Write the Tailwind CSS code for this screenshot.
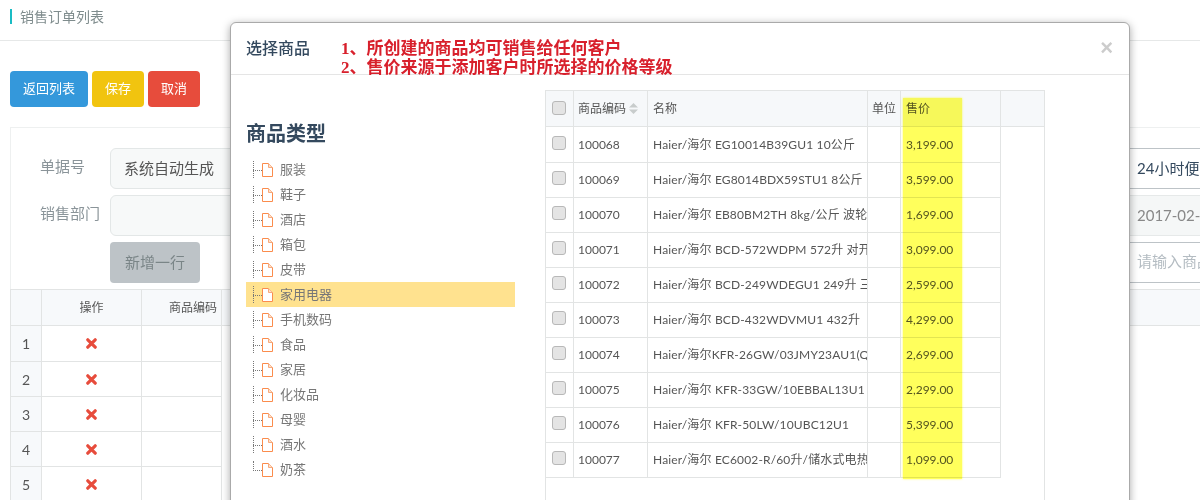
<!DOCTYPE html>
<html lang="zh-CN">
<head>
    <meta charset="UTF-8">
    <title>销售订单列表</title>
    <script src="https://cdn.jsdelivr.net/npm/@tailwindcss/browser@4"></script>
</head>
<body class="h-[500px] w-[1200px] overflow-hidden bg-white font-['Lato','Noto_Sans_CJK_SC',sans-serif] text-[#555]">

    <!-- page behind the dialog -->
    <div class="flex h-[41px] items-center border-b border-[#e6e8e8] pl-[10px] pb-[7px]">
        <span class="h-[15px] w-[2px] bg-[#1abcc4]"></span>
        <span class="ml-[8px] text-[14px] text-[#7f8c8d]">销售订单列表</span>
    </div>

    <div class="flex gap-[4px] px-[10px] pt-[30px] pb-[20px] text-[13px] text-white">
        <button class="h-[36px] w-[78px] rounded-[4px] bg-[#3498db]">返回列表</button>
        <button class="h-[36px] w-[52px] rounded-[4px] bg-[#f1c40f]">保存</button>
        <button class="h-[36px] w-[52px] rounded-[4px] bg-[#e74c3c]">取消</button>
    </div>

    <div class="ml-[10px] border-t border-l border-[#eef0f0] pt-[20px]">
        <div class="flex h-[41px] text-[15px]">
            <label class="w-[99px] pt-[7px] pl-[29px] text-[#8a9499]">单据号</label>
            <div class="flex w-[300px] items-center rounded-[6px] border border-[#e3e7e7] bg-[#f7f9f9] pl-[13px]">系统自动生成</div>
            <div class="ml-auto flex w-[80px] items-center overflow-hidden border-y border-[#bdc3c7] pl-[17px] whitespace-nowrap text-[#34495e]">24小时便利店</div>
        </div>
        <div class="mt-[6px] flex h-[41px] text-[15px]">
            <label class="w-[99px] pt-[7px] pl-[29px] text-[#8a9499]">销售部门</label>
            <div class="w-[300px] rounded-[6px] border border-[#e3e7e7] bg-[#f7f9f9]"></div>
            <div class="ml-auto flex w-[80px] items-center overflow-hidden border-y border-[#e6e9e9] bg-[#f5f7f7] pl-[17px] whitespace-nowrap text-[#888]">2017-02-14</div>
        </div>
        <div class="mt-[6px] flex h-[41px] text-[15px]">
            <div class="w-[99px]"></div>
            <button class="w-[90px] rounded-[4px] bg-[#bdc3c7] text-[#7a8587]">新增一行</button>
            <div class="ml-auto flex w-[80px] items-center overflow-hidden border-y border-[#bdc3c7] pb-[2px] pl-[17px] whitespace-nowrap text-[#b4bcc2]">请输入商品</div>
        </div>

        <table class="mt-[6px] -ml-[1px] w-[1190px] table-fixed border-separate border-spacing-0 text-[12px]">
            <colgroup><col class="w-[32px]"><col class="w-[100px]"><col class="w-[80px]"><col></colgroup>
            <thead>
                <tr class="h-[37px] bg-[#f7f9fb] font-normal">
                    <th class="border border-[#e2e4e4] font-normal"></th>
                    <th class="border-y border-r border-[#e2e4e4] font-normal">操作</th>
                    <th class="border-y border-r border-[#e2e4e4] pl-[27px] text-left font-normal whitespace-nowrap">商品编码</th>
                    <th class="border-y border-[#e2e4e4] font-normal"></th>
                </tr>
            </thead>
            <tbody id="orderRows"></tbody>
        </table>
    </div>

    <!-- dialog -->
    <div class="absolute top-[22px] left-[230px] h-[600px] w-[900px] rounded-[6px] border border-[#aaa] bg-white shadow-[0_2px_8px_rgba(0,0,0,0.35)]">
        <div class="relative flex h-[52px] border-b border-[#e5e5e5]">
            <h4 class="mt-[14px] ml-[15px] text-[16px] leading-[22px] font-medium text-[#34495e]">选择商品</h4>
            <div class="mt-[16px] ml-[31px] font-['Liberation_Serif','Noto_Sans_CJK_SC',serif] text-[17px] leading-[19px] font-bold text-[#d8202c]">
                <p>1、所创建的商品均可销售给任何客户</p>
                <p>2、售价来源于添加客户时所选择的价格等级</p>
            </div>
            <span class="absolute top-[13px] right-[16px] font-['Liberation_Sans',sans-serif] text-[22px] leading-[24px] font-bold text-[#ccc]">×</span>
        </div>

        <div class="flex">
            <div class="w-[314px] shrink-0 pt-[46px] pl-[15px]">
                <h3 class="text-[20px] leading-[24px] font-bold text-[#34495e]">商品类型</h3>
                <ul id="tree" class="mt-[12px] w-[269px] text-[13px] text-[#777]"></ul>
            </div>

            <div class="mt-[15px] h-[520px] w-[500px] border-x border-t border-[#e2e4e4]">
                <table class="w-[498px] table-fixed border-separate border-spacing-0 text-[12px]">
                    <colgroup><col class="w-[28px]"><col class="w-[74px]"><col class="w-[220px]"><col class="w-[33px]"><col class="w-[100px]"><col></colgroup>
                    <thead>
                        <tr class="h-[36px] bg-[#f6f8fa] text-left">
                            <th class="border-r border-b border-[#e2e4e4] pl-[6px] font-normal"><span class="block h-[14px] w-[14px] -translate-y-[1px] rounded-[3px] border border-[#b8b8b8] bg-[#e4e4e4]"></span></th>
                            <th class="border-r border-b border-[#e2e4e4] pl-[4px] font-normal whitespace-nowrap">
                                <span class="inline-flex items-center gap-[3px]">商品编码
                                    <svg width="9" height="11" viewBox="0 0 9 11"><path d="M4.5 0 9 4.5H0zM4.5 11 0 6.5h9z" fill="#c8cccc"/></svg>
                                </span>
                            </th>
                            <th class="border-r border-b border-[#e2e4e4] pl-[5px] font-normal">名称</th>
                            <th class="border-r border-b border-[#e2e4e4] pl-[4px] font-normal">单位</th>
                            <th class="border-r border-b border-[#e2e4e4] pl-[5px] font-normal">售价</th>
                            <th class="border-b border-[#e2e4e4] font-normal"></th>
                        </tr>
                    </thead>
                    <tbody id="goodsRows"></tbody>
                </table>
            </div>
        </div>

        <!-- yellow marker over the price column -->
        <div class="absolute top-[75px] left-[672px] h-[381px] w-[59px] bg-[#ffff5c] mix-blend-multiply shadow-[0_0_2px_#ffff5c]"></div>
    </div>

    <script>
        const trees = ["服装", "鞋子", "酒店", "箱包", "皮带", "家用电器", "手机数码", "食品", "家居", "化妆品", "母婴", "酒水", "奶茶"];
        document.getElementById("tree").innerHTML = trees.map((name, i) => {
            const last = i == trees.length - 1;
            const bg = name == "家用电器" ? "bg-[#ffe28f]" : "";
            return `<li class="relative flex h-[25px] items-center pl-[34px] ${bg}">
                <span class="absolute top-[4px] left-[7px] border-l border-dotted border-[#777] ${last ? "h-[10px]" : "h-[17px]"}"></span>
                <span class="absolute top-[13px] left-[7px] w-[9px] border-t border-dotted border-[#777]"></span>
                <svg class="absolute top-[6px] left-[16px]" width="11" height="14" viewBox="0 0 11 14"><path d="M.5.5h6l4 4v9H.5z" fill="#fff" stroke="#fb8c4c"/><path d="M6.5.5v4h4" fill="#fde0cc" stroke="#f5a97c"/></svg>
                ${name}</li>`;
        }).join("");

        const goods = [
            ["100068", "Haier/海尔 EG10014B39GU1 10公斤", "3,199.00"],
            ["100069", "Haier/海尔 EG8014BDX59STU1 8公斤", "3,599.00"],
            ["100070", "Haier/海尔 EB80BM2TH 8kg/公斤 波轮洗衣机", "1,699.00"],
            ["100071", "Haier/海尔 BCD-572WDPM 572升 对开门冰箱", "3,099.00"],
            ["100072", "Haier/海尔 BCD-249WDEGU1 249升 三门冰箱", "2,599.00"],
            ["100073", "Haier/海尔 BCD-432WDVMU1 432升", "4,299.00"],
            ["100074", "Haier/海尔KFR-26GW/03JMY23AU1(Q)空调", "2,699.00"],
            ["100075", "Haier/海尔 KFR-33GW/10EBBAL13U1", "2,299.00"],
            ["100076", "Haier/海尔 KFR-50LW/10UBC12U1", "5,399.00"],
            ["100077", "Haier/海尔 EC6002-R/60升/储水式电热水器", "1,099.00"]
        ];
        document.getElementById("goodsRows").innerHTML = goods.map((g, i) => `
            <tr class="${i == 0 ? "h-[36px]" : "h-[35px]"}">
                <td class="border-r border-b border-[#e2e4e4] pl-[6px]"><span class="block h-[14px] w-[14px] -translate-y-[2px] rounded-[3px] border border-[#b8b8b8] bg-[#e4e4e4]"></span></td>
                <td class="border-r border-b border-[#e2e4e4] pl-[4px]">${g[0]}</td>
                <td class="overflow-hidden border-r border-b border-[#e2e4e4] pl-[5px] tracking-[0.15px] whitespace-nowrap">${g[1]}</td>
                <td class="border-r border-b border-[#e2e4e4]"></td>
                <td class="border-r border-b border-[#e2e4e4] pl-[5px]">${g[2]}</td>
                <td></td>
            </tr>`).join("");

        document.getElementById("orderRows").innerHTML = [1, 2, 3, 4, 5].map((n, i) => `
            <tr class="${i == 0 ? "h-[36px]" : "h-[35px]"}">
                <td class="border-x border-b border-[#e2e4e4] bg-[#f7f9fb] text-center text-[14px]">${n}</td>
                <td class="border-r border-b border-[#e2e4e4]"><svg class="mx-auto" width="11" height="11" viewBox="0 0 11 11"><path d="M1.8 1.8l7.4 7.4M9.2 1.8L1.8 9.2" stroke="#e74c3c" stroke-width="3.2" stroke-linecap="round"/></svg></td>
                <td class="border-r border-b border-[#e2e4e4]"></td>
                <td></td>
            </tr>`).join("");
    </script>
</body>
</html>
